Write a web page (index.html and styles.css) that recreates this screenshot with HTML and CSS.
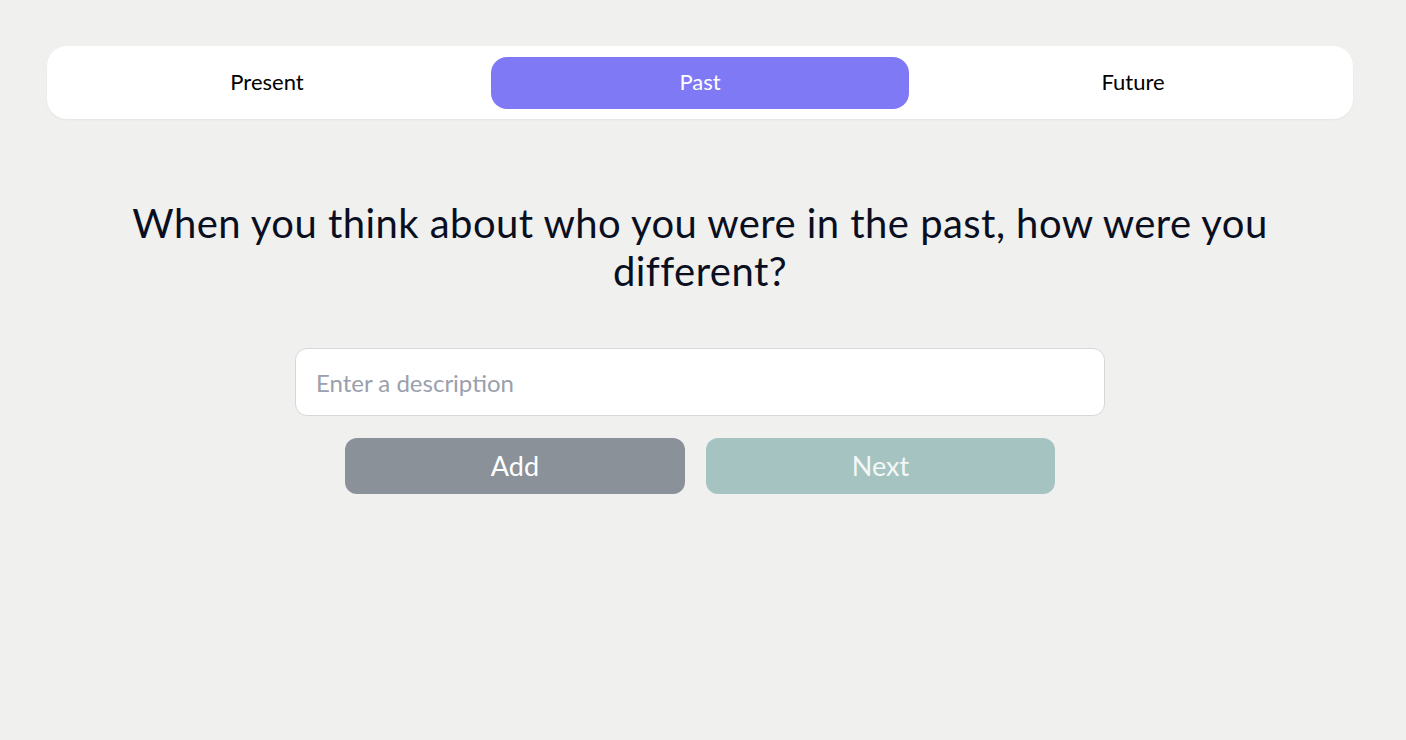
FILE: index.html
```html
<!DOCTYPE html>
<html lang="en">
<head>
<meta charset="utf-8">
<title>Past</title>
<link rel="stylesheet" href="styles.css">
</head>
<body>
<div class="page">
  <nav class="tabs">
    <button class="tab">Present</button>
    <button class="tab active">Past</button>
    <button class="tab">Future</button>
  </nav>
  <main class="content">
    <h1 class="question">When you think about who you were in the past, how were you different?</h1>
    <input class="desc" type="text" placeholder="Enter a description">
    <div class="actions">
      <button class="btn btn-add">Add</button>
      <button class="btn btn-next">Next</button>
    </div>
  </main>
</div>
</body>
</html>
```
FILE: styles.css
```css
html, body {
  margin: 0;
  padding: 0;
  background: #f0f0ee;
}
body {
  font-family: "Lato", "Open Sans", sans-serif;
  color: #0a0f1f;
}
.page {
  width: 1400px;
  box-sizing: border-box;
  padding: 46px 47px 0;
}
.tabs {
  display: grid;
  grid-template-columns: repeat(3, 1fr);
  column-gap: 15px;
  padding: 11px 11px 10px;
  background: #ffffff;
  border-radius: 20px;
  box-shadow: 0 1px 2px rgba(0, 0, 0, 0.05);
}
.tab {
  height: 52px;
  border: none;
  background: transparent;
  border-radius: 16px;
  font-family: "Lato", sans-serif;
  font-size: 22px;
  line-height: 1;
  color: #000;
  padding: 0 0 2px;
  cursor: pointer;
}
.tab.active {
  background: #7f79f6;
  color: #ffffff;
}
.content {
  display: flex;
  flex-direction: column;
  align-items: center;
}
.question {
  margin: 80px 0 0;
  max-width: 1200px;
  text-align: center;
  font-size: 40px;
  line-height: 48px;
  font-weight: 400;
  letter-spacing: 0.45px;
  color: #0a0f1f;
}
.desc {
  margin-top: 53px;
  width: 810px;
  height: 68px;
  box-sizing: border-box;
  border: 1px solid #d6d6db;
  border-radius: 12px;
  background: #fff;
  padding: 0 20px;
  font-family: "Lato", sans-serif;
  font-size: 24px;
  color: #111;
  outline: none;
}
.desc::placeholder {
  color: #9aa0ac;
}
.actions {
  margin-top: 22px;
  width: 710px;
  display: flex;
  gap: 21px;
}
.btn {
  flex: 1 1 auto;
  height: 56px;
  border: none;
  border-radius: 12px;
  font-family: "Lato", sans-serif;
  font-size: 27px;
  padding: 0 0 2px;
  cursor: pointer;
}
.btn-add {
  background: #8a9198;
  color: #ffffff;
}
.btn-next {
  background: #a5c4c1;
  color: #f4f7f6;
}
```
